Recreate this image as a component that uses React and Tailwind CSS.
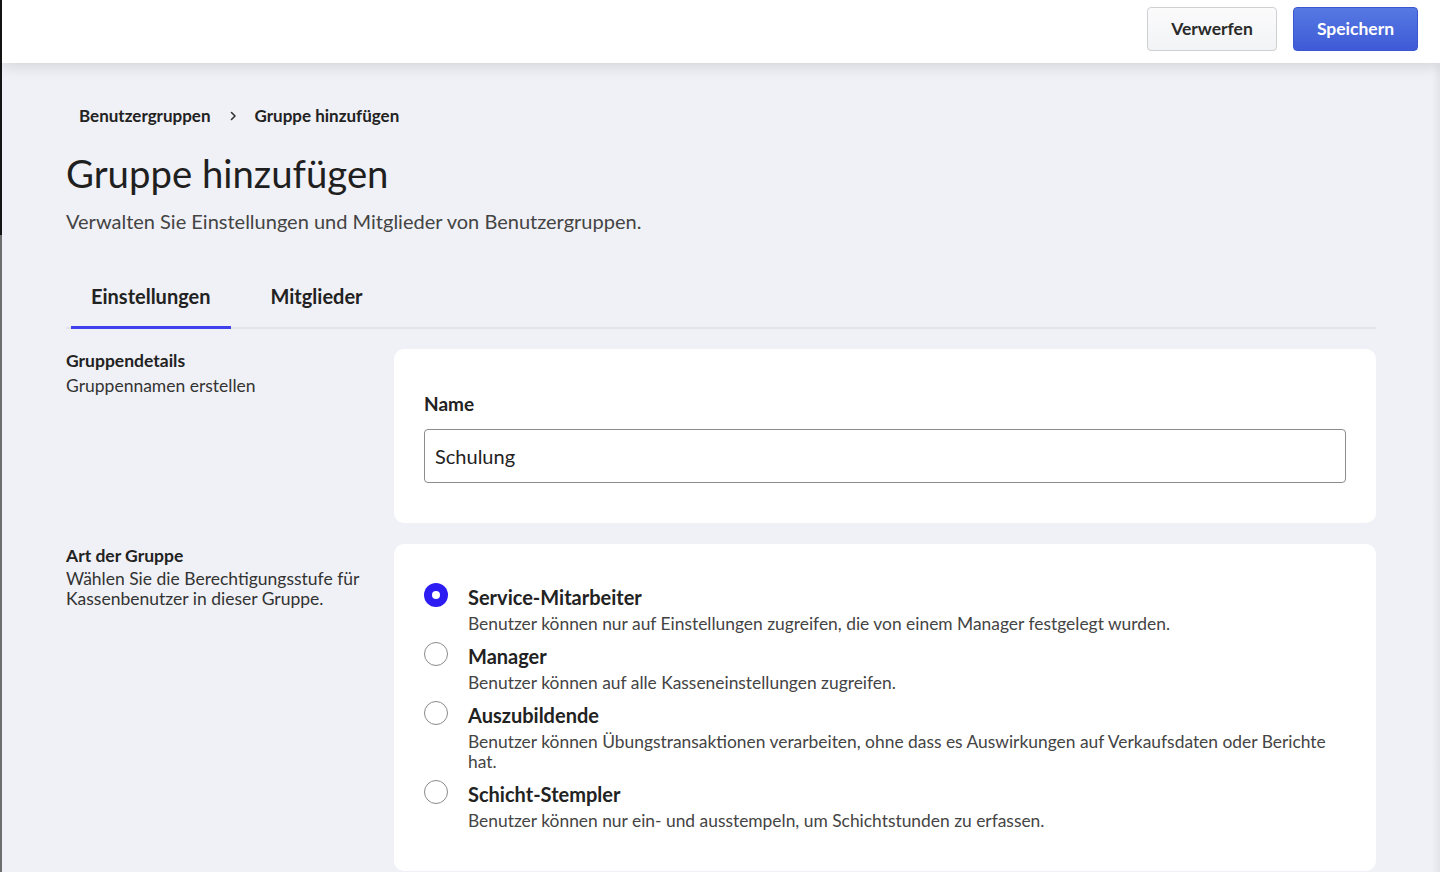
const options = [
  {
    title: "Service-Mitarbeiter",
    desc: "Benutzer können nur auf Einstellungen zugreifen, die von einem Manager festgelegt wurden.",
    checked: true,
  },
  { title: "Manager", desc: "Benutzer können auf alle Kasseneinstellungen zugreifen." },
  {
    title: "Auszubildende",
    desc: "Benutzer können Übungstransaktionen verarbeiten, ohne dass es Auswirkungen auf Verkaufsdaten oder Berichte hat.",
  },
  { title: "Schicht-Stempler", desc: "Benutzer können nur ein- und ausstempeln, um Schichtstunden zu erfassen." },
];

function Radio({ checked }) {
  if (checked) {
    return (
      <span className="mt-[-2px] flex h-6 w-6 shrink-0 items-center justify-center rounded-full bg-[#2d1df2]">
        <span className="h-2 w-2 rounded-full bg-white" />
      </span>
    );
  }
  return <span className="mt-[-2px] h-6 w-6 shrink-0 rounded-full border border-[#8a8a8a] bg-white" />;
}

export default function App() {
  return (
    <div className="flex h-[872px] w-[1440px] overflow-hidden bg-[#f0f1f6] font-['Lato','Liberation_Sans',sans-serif] text-[#222]">
      {/* window edge */}
      <div className="flex w-[2px] shrink-0 flex-col">
        <div className="h-[235px] bg-[#151515]" />
        <div className="flex-1 bg-[#6e6e6e]" />
      </div>

      <div className="flex min-w-0 flex-1 flex-col">
        <header className="relative z-10 flex h-[63px] shrink-0 items-start justify-end gap-4 bg-white pt-[7px] pr-[22px] shadow-[0_3px_14px_rgba(0,0,0,0.13)]">
          <button className="h-[44px] w-[130px] rounded-[4px] border border-[#cfd0d4] bg-gradient-to-b from-[#fbfbfc] to-[#f2f3f5] text-[17.5px] font-bold text-[#2a2a2a]">
            Verwerfen
          </button>
          <button className="h-[44px] w-[125px] rounded-[4px] border border-[#3c56cf] bg-gradient-to-b from-[#5679e3] to-[#3f5ad6] text-[17.5px] font-bold text-white">
            Speichern
          </button>
        </header>

        <div className="flex min-h-0 flex-1">
          <main className="flex-1 pl-[64px] pr-[56px] pt-[42px]">
            <nav className="flex items-center pl-[13px] text-[17px] font-bold leading-[22px] text-[#222]">
              <span>Benutzergruppen</span>
              <svg className="mx-[16px] h-[12px] w-[12px]" viewBox="0 0 12 12" fill="none">
                <path d="M4.5 2.5 8 6 4.5 9.5" stroke="#333" strokeWidth="1.6" strokeLinecap="round" strokeLinejoin="round" />
              </svg>
              <span>Gruppe hinzufügen</span>
            </nav>

            <h1 className="mt-[22px] text-[38.3px] leading-[48px] font-normal text-[#1f1f1f]">Gruppe hinzufügen</h1>
            <p className="mt-[11px] text-[20px] leading-[26px] text-[#444]">
              Verwalten Sie Einstellungen und Mitglieder von Benutzergruppen.
            </p>

            <div className="mt-[49px] flex border-b-2 border-[#e3e4e9] pl-[5px]">
              <div className="-mb-[2px] border-b-[3px] border-[#4140ee] px-5 pb-[17px] text-[20px] leading-[26px] font-bold text-[#222]">
                Einstellungen
              </div>
              <div className="ml-5 px-5 pb-[17px] text-[20px] leading-[26px] font-bold text-[#222]">Mitglieder</div>
            </div>

            <section className="mt-[20px] flex">
              <div className="w-[328px] shrink-0 pr-5 pt-[1px]">
                <div className="text-[17.5px] leading-[22px] font-bold">Gruppendetails</div>
                <div className="mt-[3px] text-[17.5px] leading-[22px] text-[#333]">Gruppennamen erstellen</div>
              </div>
              <div className="flex-1 rounded-[10px] bg-white px-[30px] pt-[43px] pb-[40px]">
                <label className="block text-[19px] leading-[24px] font-bold text-[#222]">Name</label>
                <input
                  className="mt-[13px] block h-[54px] w-full rounded-[4px] border border-[#8c8c8c] bg-white px-[10px] text-[20px] text-[#222] outline-none"
                  defaultValue="Schulung"
                />
              </div>
            </section>

            <section className="mt-[21px] flex">
              <div className="w-[328px] shrink-0 pr-8 pt-[1px]">
                <div className="text-[17.5px] leading-[22px] font-bold">Art der Gruppe</div>
                <div className="mt-[2px] text-[17.5px] leading-[20px] text-[#333]">
                  Wählen Sie die Berechtigungsstufe für Kassenbenutzer in dieser Gruppe.
                </div>
              </div>
              <div className="flex flex-1 flex-col gap-[10px] rounded-[10px] bg-white px-[30px] pt-[41px] pb-[40px]">
                {options.map((o) => (
                  <div key={o.title} className="flex gap-5">
                    <Radio checked={o.checked} />
                    <div className="flex-1">
                      <div className="text-[20px] leading-[24px] font-bold text-[#222]">{o.title}</div>
                      <div className="mt-[5px] text-[17.4px] leading-[20px] text-[#444]">{o.desc}</div>
                    </div>
                  </div>
                ))}
              </div>
            </section>
          </main>
          <div className="w-[8px] shrink-0 bg-gradient-to-r from-[#f0f1f6] to-[#e3e4ea]" />
        </div>
      </div>
    </div>
  );
}
